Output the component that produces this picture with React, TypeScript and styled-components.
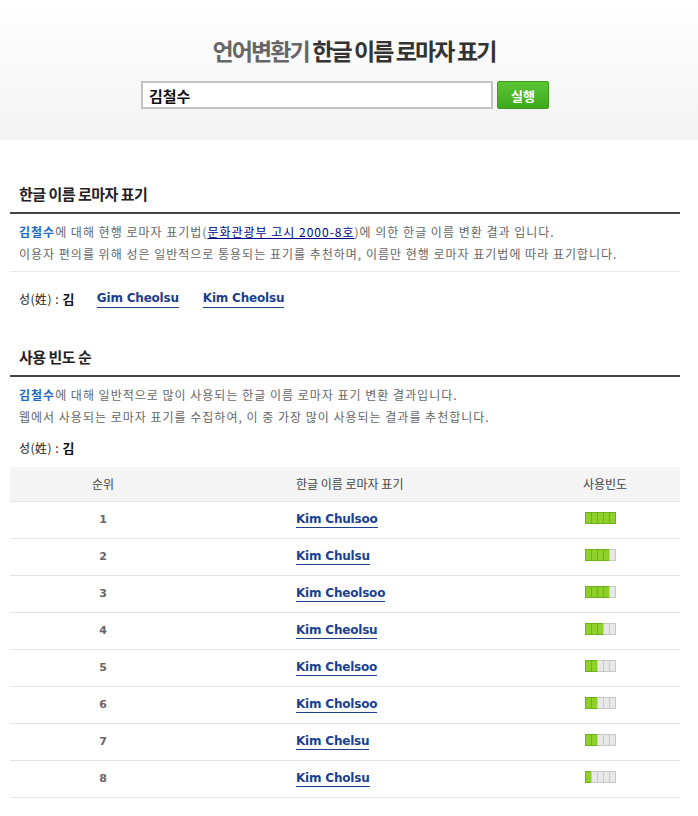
import React from 'react';
import styled, { createGlobalStyle } from 'styled-components';

const GlobalStyle = createGlobalStyle`
  html, body {
    margin: 0;
    padding: 0;
    background: #ffffff;
  }
  body {
    font-family: 'Noto Sans CJK KR', 'Noto Sans', sans-serif;
    color: #666666;
  }
  * {
    box-sizing: border-box;
  }
`;

const rows = [
  { rank: 1, name: 'Kim Chulsoo', level: 5 },
  { rank: 2, name: 'Kim Chulsu', level: 4 },
  { rank: 3, name: 'Kim Cheolsoo', level: 4 },
  { rank: 4, name: 'Kim Cheolsu', level: 3 },
  { rank: 5, name: 'Kim Chelsoo', level: 2 },
  { rank: 6, name: 'Kim Cholsoo', level: 2 },
  { rank: 7, name: 'Kim Chelsu', level: 2 },
  { rank: 8, name: 'Kim Cholsu', level: 1 },
];

const App: React.FC = () => {
  return (
    <Page>
      <GlobalStyle />
      <Header>
        <Title>
          <TitleLight>언어변환기</TitleLight> 한글 이름 로마자 표기
        </Title>
        <SearchRow>
          <SearchInput defaultValue='김철수' />
          <RunButton>실행</RunButton>
        </SearchRow>
      </Header>

      <Content>
        <Section>
          <SectionTitle>한글 이름 로마자 표기</SectionTitle>
          <Desc>
            <p>
              <Strong>김철수</Strong>에 대해 현행 로마자 표기법(
              <RefLink>문화관광부 고시 2000-8호</RefLink>)에 의한 한글 이름 변환
              결과 입니다.
            </p>
            <p>
              이용자 편의를 위해 성은 일반적으로 통용되는 표기를 추천하며,
              이름만 현행 로마자 표기법에 따라 표기합니다.
            </p>
          </Desc>
          <SurnameRow>
            <Surname>
              성(姓) : <b>김</b>
            </Surname>
            <NameLink>Gim Cheolsu</NameLink>
            <NameLink>Kim Cheolsu</NameLink>
          </SurnameRow>
        </Section>

        <Section>
          <SectionTitle>사용 빈도 순</SectionTitle>
          <Desc $plain>
            <p>
              <Strong>김철수</Strong>에 대해 일반적으로 많이 사용되는 한글 이름
              로마자 표기 변환 결과입니다.
            </p>
            <p>
              웹에서 사용되는 로마자 표기를 수집하여, 이 중 가장 많이 사용되는
              결과를 추천합니다.
            </p>
          </Desc>
          <Surname $small>
            성(姓) : <b>김</b>
          </Surname>

          <Table>
            <thead>
              <tr>
                <Th $w={186}>순위</Th>
                <Th $align='left'>한글 이름 로마자 표기</Th>
                <Th $w={150}>사용빈도</Th>
              </tr>
            </thead>
            <tbody>
              {rows.map((row) => (
                <tr key={row.rank}>
                  <RankCell>{row.rank}</RankCell>
                  <NameCell>
                    <NameLink>{row.name}</NameLink>
                  </NameCell>
                  <BarCell>
                    <Bar>
                      {[1, 2, 3, 4, 5].map((i) => (
                        <Seg key={i} $on={i <= row.level} />
                      ))}
                    </Bar>
                  </BarCell>
                </tr>
              ))}
            </tbody>
          </Table>
        </Section>
      </Content>
    </Page>
  );
};

const Page = styled.div`
  width: 698px;
  min-height: 816px;
  background: #ffffff;
`;

const Header = styled.div`
  height: 140px;
  padding-top: 34px;
  background: linear-gradient(to bottom, #ffffff 0%, #f3f3f3 100%);
  display: flex;
  flex-direction: column;
  align-items: center;
`;

const Title = styled.h1`
  margin: 0 0 0 10px;
  font-size: 23px;
  font-weight: 700;
  letter-spacing: -1.9px;
  color: #333333;
  line-height: 32px;
`;

const TitleLight = styled.span`
  color: #666666;
`;

const SearchRow = styled.div`
  display: flex;
  gap: 4px;
  margin-top: 15px;
  margin-left: -8px;
`;

const SearchInput = styled.input`
  width: 352px;
  height: 28px;
  border: 2px solid #c3c3c3;
  padding: 0 6px;
  font-family: 'Noto Sans CJK KR', sans-serif;
  font-size: 15px;
  font-weight: 700;
  color: #111111;
  outline: none;
`;

const RunButton = styled.button`
  width: 52px;
  height: 28px;
  border: 1px solid #3a9b1a;
  border-radius: 2px;
  background: linear-gradient(to bottom, #5cc534 0%, #3ea91c 100%);
  color: #ffffff;
  font-family: 'Noto Sans CJK KR', sans-serif;
  font-size: 13px;
  font-weight: 700;
  padding: 0;
`;

const Content = styled.div`
  width: 670px;
  margin: 0 0 0 10px;
  padding-top: 42px;
`;

const Section = styled.section`
  margin-bottom: 36px;
`;

const SectionTitle = styled.h2`
  margin: 0;
  padding: 0 9px 6px;
  font-size: 15px;
  font-weight: 700;
  letter-spacing: -0.5px;
  color: #222222;
  line-height: 24px;
  border-bottom: 2px solid #444444;
`;

const Desc = styled.div<{ $plain?: boolean }>`
  padding: 7px 9px 6px;
  border-bottom: ${(p) => (p.$plain ? 'none' : '1px solid #e8e8e8')};
  font-size: 12px;
  line-height: 22px;
  letter-spacing: 1px;
  color: #666666;

  p {
    margin: 0;
  }
`;

const Strong = styled.b`
  color: #2469c0;
  font-weight: 700;
`;

const RefLink = styled.a`
  color: #00008b;
  text-decoration: underline;
`;

const SurnameRow = styled.div`
  display: flex;
  align-items: center;
  gap: 22px;
  padding: 17px 9px 0;

  a + a {
    margin-left: 2px;
  }
`;

const Surname = styled.div<{ $small?: boolean }>`
  font-size: 12px;
  letter-spacing: 0.5px;
  color: #222222;
  line-height: 20px;
  padding: ${(p) => (p.$small ? '4px 9px 9px' : '0')};

  b {
    color: #111111;
    font-size: 13px;
  }
`;

const NameLink = styled.a`
  font-family: 'DejaVu Sans', Verdana, sans-serif;
  font-size: 12px;
  font-weight: 700;
  letter-spacing: -0.2px;
  line-height: 16px;
  color: #1c3f8f;
  text-decoration: none;
  border-bottom: 1px solid #1c3f8f;
  padding-bottom: 1px;
`;

const Table = styled.table`
  width: 100%;
  border-collapse: collapse;

  td {
    font-size: 12px;
    line-height: 16px;
  }
`;

const Th = styled.th<{ $w?: number; $align?: string }>`
  width: ${(p) => (p.$w ? `${p.$w}px` : 'auto')};
  height: 34px;
  background: #f4f4f4;
  border-bottom: 1px solid #e4e4e4;
  font-size: 12px;
  font-weight: 400;
  color: #444444;
  text-align: ${(p) => p.$align || 'center'};
  padding: 0 0 0 ${(p) => (p.$align === 'left' ? '100px' : '0')};
`;

const RankCell = styled.td`
  height: 37px;
  text-align: center;
  font-family: 'DejaVu Sans', Tahoma, sans-serif;
  font-weight: 700;
  color: #666666;
  border-bottom: 1px solid #e4e4e4;

  && {
    font-size: 11px;
  }
`;

const NameCell = styled.td`
  padding: 0 0 2px 100px;
  border-bottom: 1px solid #e4e4e4;
`;

const BarCell = styled.td`
  text-align: center;
  border-bottom: 1px solid #e4e4e4;
`;

const Bar = styled.span`
  display: inline-flex;
  vertical-align: middle;
  margin: 0 10px 4px 0;
`;

const Seg = styled.span<{ $on: boolean }>`
  width: 7px;
  height: 12px;
  background: ${(p) => (p.$on ? '#8fd02a' : '#e8e8e8')};
  border: 1px solid ${(p) => (p.$on ? '#6cb01c' : '#c8c8c8')};
  margin-left: -1px;

  &:first-child {
    margin-left: 0;
  }
`;

export default App;
